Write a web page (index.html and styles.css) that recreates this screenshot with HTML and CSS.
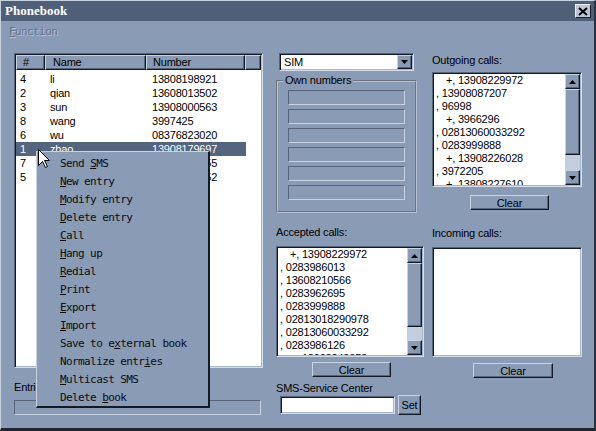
FILE: index.html
```html
<!DOCTYPE html>
<html>
<head>
<meta charset="utf-8">
<title>Phonebook</title>
<link rel="stylesheet" href="styles.css">
</head>
<body>
<div class="window">
  <div class="titlebar">
    <span class="title">Phonebook</span>
    <span class="close"><svg width="10" height="9" viewBox="0 0 10 9"><path d="M1 1 L9 8 M9 1 L1 8" stroke="#000" stroke-width="2" fill="none"/></svg></span>
  </div>
  <div class="menubar"><span class="menu-top"><u>F</u>unction</span></div>
  <div class="content">
    <div class="col col-left">
      <div class="listview">
        <div class="lv-header">
          <div class="hcell h1">#</div>
          <div class="hcell h2">Name</div>
          <div class="hcell h3">Number</div>
          <div class="hcell h4"></div>
        </div>
        <div class="lv-body">
          <div class="row"><span class="c1">4</span><span class="c2">li</span><span class="c3">13808198921</span></div>
          <div class="row"><span class="c1">2</span><span class="c2">qian</span><span class="c3">13608013502</span></div>
          <div class="row"><span class="c1">3</span><span class="c2">sun</span><span class="c3">13908000563</span></div>
          <div class="row"><span class="c1">8</span><span class="c2">wang</span><span class="c3">3997425</span></div>
          <div class="row"><span class="c1">6</span><span class="c2">wu</span><span class="c3">08376823020</span></div>
          <div class="row sel"><span class="c1">1</span><span class="c2">zhao</span><span class="c3">13908179697</span></div>
          <div class="row"><span class="c1">7</span><span class="c2">zhou</span><span class="c3">13908012355</span></div>
          <div class="row"><span class="c1">5</span><span class="c2">zheng</span><span class="c3">13808226652</span></div>
        </div>
      </div>
      <div class="label entries">Entries:</div>
      <div class="progress"></div>
    </div>

    <div class="col col-mid">
      <div class="combo">
        <span class="combo-text">SIM</span>
        <span class="combo-btn"><svg width="7" height="4" viewBox="0 0 7 4"><path d="M0 0 H7 L3.5 4 Z" fill="#000"/></svg></span>
      </div>
      <fieldset class="group">
        <legend>Own numbers</legend>
        <div class="field"></div>
        <div class="field"></div>
        <div class="field"></div>
        <div class="field"></div>
        <div class="field"></div>
        <div class="field"></div>
      </fieldset>
      <div class="label acc-label">Accepted calls:</div>
      <div class="listbox acc">
        <div class="items">
          <div class="it ind">+, 13908229972</div>
          <div class="it">, 0283986013</div>
          <div class="it">, 13608210566</div>
          <div class="it">, 0283962695</div>
          <div class="it">, 0283999888</div>
          <div class="it">, 02813018290978</div>
          <div class="it">, 02813060033292</div>
          <div class="it">, 0283986126</div>
          <div class="it ind">+, 13908240853</div>
        </div>
        <div class="vscroll">
          <div class="sb-btn"><svg width="7" height="4" viewBox="0 0 7 4"><path d="M0 4 H7 L3.5 0 Z" fill="#000"/></svg></div>
          <div class="sb-thumb acc-thumb"></div>
          <div class="sb-track"></div>
          <div class="sb-btn"><svg width="7" height="4" viewBox="0 0 7 4"><path d="M0 0 H7 L3.5 4 Z" fill="#000"/></svg></div>
        </div>
      </div>
      <button class="btn clear clear-acc">Clear</button>
      <div class="label sms-label">SMS-Service Center</div>
      <div class="sms-row">
        <div class="edit"></div>
        <button class="btn set">Set</button>
      </div>
    </div>

    <div class="col col-right">
      <div class="label out-label">Outgoing calls:</div>
      <div class="listbox out">
        <div class="items">
          <div class="it ind">+, 13908229972</div>
          <div class="it">, 13908087207</div>
          <div class="it">, 96998</div>
          <div class="it ind">+, 3966296</div>
          <div class="it">, 02813060033292</div>
          <div class="it">, 0283999888</div>
          <div class="it ind">+, 13908226028</div>
          <div class="it">, 3972205</div>
          <div class="it ind">+, 13808227610</div>
        </div>
        <div class="vscroll">
          <div class="sb-btn"><svg width="7" height="4" viewBox="0 0 7 4"><path d="M0 4 H7 L3.5 0 Z" fill="#000"/></svg></div>
          <div class="sb-thumb out-thumb"></div>
          <div class="sb-track"></div>
          <div class="sb-btn"><svg width="7" height="4" viewBox="0 0 7 4"><path d="M0 0 H7 L3.5 4 Z" fill="#000"/></svg></div>
        </div>
      </div>
      <button class="btn clear clear-out">Clear</button>
      <div class="label inc-label">Incoming calls:</div>
      <div class="listbox inc"></div>
      <button class="btn clear clear-inc">Clear</button>
    </div>
  </div>

  <div class="ctxmenu">
    <div class="mi">Send <u>S</u>MS</div>
    <div class="mi"><u>N</u>ew entry</div>
    <div class="mi"><u>M</u>odify entry</div>
    <div class="mi"><u>D</u>elete entry</div>
    <div class="mi"><u>C</u>all</div>
    <div class="mi"><u>H</u>ang up</div>
    <div class="mi"><u>R</u>edial</div>
    <div class="mi"><u>P</u>rint</div>
    <div class="mi"><u>E</u>xport</div>
    <div class="mi"><u>I</u>mport</div>
    <div class="mi">Save to e<u>x</u>ternal book</div>
    <div class="mi">Normalize entr<u>i</u>es</div>
    <div class="mi"><u>M</u>ulticast SMS</div>
    <div class="mi">Delete <u>b</u>ook</div>
  </div>

  <svg class="cursor" width="13" height="20" viewBox="0 0 13 20">
    <path d="M0.5 0.5 L0.5 16.5 L4.5 12.5 L7.5 18.5 L9.5 17.5 L6.5 11.5 L11.5 11.5 Z" fill="#fff" stroke="#000" stroke-width="1"/>
  </svg>
</div>
</body>
</html>
```

FILE: styles.css
```css
:root {
  --face: #8a9bb5;
  --light: #c8d3e2;
  --shadow: #56657c;
  --dark: #141a24;
  --title: #4f5f78;
  --sel: #55657e;
}

html, body {
  margin: 0;
  padding: 0;
  background: var(--face);
}

.window {
  position: relative;
  width: 596px;
  height: 431px;
  box-sizing: border-box;
  background: var(--face);
  border-top: 1px solid var(--light);
  border-left: 1px solid var(--light);
  border-right: 2px solid #2a3240;
  border-bottom: 3px solid #20262f;
  font-family: "Liberation Sans", Arial, sans-serif;
  font-size: 11px;
  letter-spacing: -0.2px;
  color: #000;
  overflow: hidden;
}

/* title bar */
.titlebar {
  height: 20px;
  background: var(--title);
  display: flex;
  align-items: center;
  padding: 0 3px 0 4px;
}
.title {
  font-family: "Liberation Serif", "Times New Roman", serif;
  font-weight: bold;
  font-size: 13px;
  letter-spacing: 0;
  color: #fff;
}
.close {
  margin-left: auto;
  width: 16px;
  height: 14px;
  box-sizing: border-box;
  background: #bcc6d4;
  border: 1px solid;
  border-color: #eef2f8 #1a1f28 #1a1f28 #eef2f8;
  display: flex;
  align-items: center;
  justify-content: center;
}

/* menu bar */
.menubar {
  height: 17px;
  box-sizing: border-box;
  padding: 4px 0 0 8px;
}
.menu-top {
  font-family: "DejaVu Sans Mono", monospace;
  font-size: 11px;
  letter-spacing: -0.6px;
  line-height: 12px;
  color: #66768e;
  text-shadow: 1px 1px 0 #b4c1d3;
}

/* content */
.content {
  display: flex;
  padding: 15px 0 0 13px;
}
.col { display: flex; flex-direction: column; align-items: flex-start; }
.col-left { width: 262px; }
.col-mid { width: 156px; }
.col-right { width: 150px; }

.label { line-height: 13px; white-space: nowrap; }

/* list view */
.listview {
  width: 249px;
  height: 315px;
  box-sizing: border-box;
  background: #fff;
  border: 1px solid;
  border-color: var(--shadow) #d4dde9 #d4dde9 var(--shadow);
  box-shadow: inset 1px 1px 0 var(--dark), inset -1px -1px 0 #a9b7ca;
  padding: 1px;
  display: flex;
  flex-direction: column;
}
.lv-header {
  display: flex;
  height: 15px;
  background: var(--face);
}
.hcell {
  box-sizing: border-box;
  height: 15px;
  line-height: 13px;
  border: 1px solid;
  border-color: var(--light) var(--dark) var(--dark) var(--light);
  box-shadow: inset -1px -1px 0 var(--shadow);
  white-space: nowrap;
}
.h1 { width: 29px; padding-left: 6px; }
.h2 { width: 101px; padding-left: 7px; }
.h3 { width: 99px; padding-left: 6px; }
.h4 { flex: 1; }

.lv-body { padding-top: 2px; }
.row {
  display: flex;
  width: 230px;
  height: 14px;
  line-height: 14px;
  white-space: nowrap;
}
.row span { box-sizing: border-box; padding-left: 4px; }
.c1 { width: 30px; }
.c2 { width: 102px; }
.c3 { width: 98px; }
.row.sel { background: var(--sel); color: #fff; }

.entries { margin-top: 13px; }
.progress {
  margin-top: 6px;
  width: 247px;
  height: 15px;
  box-sizing: border-box;
  border: 1px solid;
  border-color: var(--shadow) var(--light) var(--light) var(--shadow);
}

/* combo */
.combo {
  margin-left: 3px;
  width: 135px;
  height: 18px;
  box-sizing: border-box;
  background: #fff;
  border: 1px solid;
  border-color: var(--shadow) #d4dde9 #d4dde9 var(--shadow);
  box-shadow: inset 1px 1px 0 var(--dark), inset -1px -1px 0 #a9b7ca;
  padding: 1px;
  display: flex;
}
.combo-text { padding-left: 3px; line-height: 14px; }
.combo-btn {
  margin-left: auto;
  width: 15px;
  height: 14px;
  box-sizing: border-box;
  background: var(--face);
  border: 1px solid;
  border-color: var(--light) var(--dark) var(--dark) var(--light);
  box-shadow: inset -1px -1px 0 var(--shadow);
  display: flex;
  align-items: center;
  justify-content: center;
}

/* group box */
.group {
  margin: 3px 0 0 0;
  width: 141px;
  min-inline-size: 0;
  box-sizing: border-box;
  padding: 3px 0 11px 0;
  border: 2px groove #b4c1d4;
}
.group legend {
  margin-left: 5px;
  padding: 0 2px;
  line-height: 13px;
}
.field {
  margin-left: 10px;
  width: 117px;
  height: 15px;
  box-sizing: border-box;
  border: 1px solid;
  border-color: var(--shadow) var(--light) var(--light) var(--shadow);
}
.field + .field { margin-top: 4px; }

/* listboxes */
.listbox {
  box-sizing: border-box;
  background: #fff;
  border: 1px solid;
  border-color: var(--shadow) #d4dde9 #d4dde9 var(--shadow);
  box-shadow: inset 1px 1px 0 var(--dark), inset -1px -1px 0 #a9b7ca;
  padding: 1px;
  display: flex;
  overflow: hidden;
}
.items {
  flex: 1;
  overflow: hidden;
  padding-left: 2px;
}
.it { line-height: 13px; height: 13px; white-space: nowrap; }
.it.ind { padding-left: 10px; }

.vscroll {
  width: 15px;
  display: flex;
  flex-direction: column;
  flex-shrink: 0;
}
.sb-btn, .sb-thumb {
  box-sizing: border-box;
  background: var(--face);
  border: 1px solid;
  border-color: var(--light) var(--dark) var(--dark) var(--light);
  box-shadow: inset -1px -1px 0 var(--shadow);
}
.sb-btn {
  height: 15px;
  display: flex;
  align-items: center;
  justify-content: center;
}
.sb-track { flex: 1; background: #c3cddb; }

.out { width: 150px; height: 115px; margin-top: 5px; }
.out-thumb { height: 66px; }
.acc { width: 148px; height: 111px; margin-top: 7px; }
.acc-thumb { height: 64px; }
.inc { width: 150px; height: 110px; margin-top: 7px; }

.acc-label { margin-top: 13px; }
.out-label { margin-top: 1px; }
.inc-label { margin-top: 17px; }

/* buttons */
.btn {
  font-family: "Liberation Sans", Arial, sans-serif;
  font-size: 11px;
  letter-spacing: -0.2px;
  color: #000;
  box-sizing: border-box;
  background: var(--face);
  border: 1px solid;
  border-color: var(--light) var(--dark) var(--dark) var(--light);
  box-shadow: inset -1px -1px 0 var(--shadow);
  padding: 0;
  margin: 0;
  line-height: 12px;
}
.clear { width: 79px; height: 15px; }
.clear-acc { margin: 5px 0 0 36px; }
.clear-out { margin: 8px 0 0 38px; }
.clear-inc { margin: 6px 0 0 41px; width: 80px; }

.sms-label { margin-top: 5px; }
.sms-row { display: flex; align-items: center; margin-left: 4px; }
.edit {
  width: 115px;
  height: 18px;
  box-sizing: border-box;
  background: #fff;
  border: 1px solid;
  border-color: var(--shadow) #d4dde9 #d4dde9 var(--shadow);
  box-shadow: inset 1px 1px 0 var(--dark), inset -1px -1px 0 #a9b7ca;
}
.set { width: 23px; height: 20px; margin-left: 3px; }

/* context menu (overlay) */
.ctxmenu {
  position: absolute;
  left: 35px;
  top: 150px;
  width: 174px;
  height: 257px;
  box-sizing: border-box;
  background: var(--face);
  border: 1px solid;
  border-color: var(--light) var(--dark) var(--dark) var(--light);
  border-right-width: 2px;
  border-bottom-width: 2px;
  padding-top: 3px;
  font-family: "DejaVu Sans Mono", monospace;
  font-size: 11px;
  letter-spacing: -0.6px;
  color: #0c0c10;
}
.mi {
  height: 18px;
  line-height: 18px;
  padding-left: 23px;
  white-space: nowrap;
}

.cursor {
  position: absolute;
  left: 37px;
  top: 148px;
}
```
